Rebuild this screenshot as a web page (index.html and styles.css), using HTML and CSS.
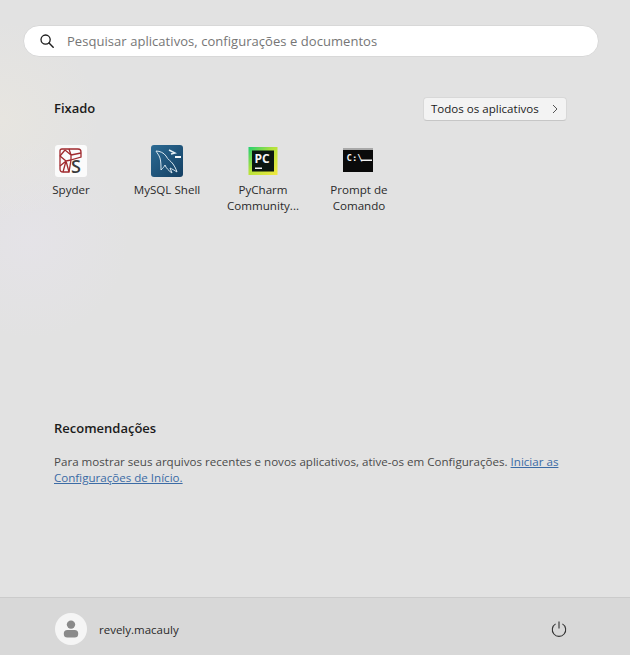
FILE: index.html
```html
<!DOCTYPE html>
<html lang="pt-BR">
<head>
<meta charset="utf-8">
<title>Iniciar</title>
<link rel="stylesheet" href="styles.css">
</head>
<body>
<main class="menu">
  <div class="content">
    <div class="search">
      <svg class="search-icon" viewBox="0 0 14 14" width="14" height="14"><circle cx="5.6" cy="5.6" r="4.6" fill="none" stroke="#1c1c1c" stroke-width="1.3"/><path d="M9 9 L13.2 13.2" stroke="#1c1c1c" stroke-width="1.4" stroke-linecap="round"/></svg>
      <span class="search-text">Pesquisar aplicativos, configurações e documentos</span>
    </div>
    <section class="pinned">
      <div class="section-head">
        <h2 class="section-title head-title">Fixado</h2>
        <div class="all-apps"><span>Todos os aplicativos</span>
          <svg class="chevron" viewBox="0 0 8 10" width="8" height="10"><path d="M2 1 L6 5 L2 9" fill="none" stroke="#555" stroke-width="1"/></svg>
        </div>
      </div>
      <div class="apps">
        <div class="app">
          <svg class="app-icon" viewBox="0 0 32 32" width="32" height="32">
            <rect width="32" height="32" rx="3" fill="#fbfbfb"/>
            <g fill="none" stroke="#a02a2e" stroke-width="1.3">
              <path d="M5 6 Q5 4 7 4 H23 Q26 4 26 7 V12 L16 15 L14 27 H8 Q5 27 5 24 Z"/>
              <path d="M5 11 L10 5 M5 11 L11 16 L16 15 M11 16 L8 27 M11 16 L5 21 M10 5 L16 10 L16 15 M16 10 L26 8 M14 4 L16 10 M11 16 L14 27"/>
            </g>
            <text x="16" y="27.5" class="spyder-s">S</text>
          </svg>
          <span class="app-label">Spyder</span>
        </div>
        <div class="app">
          <svg class="app-icon" viewBox="0 0 32 32" width="32" height="32">
            <defs><linearGradient id="my" x1="0" y1="0" x2="1" y2="1"><stop offset="0" stop-color="#2c6b94"/><stop offset="1" stop-color="#143f62"/></linearGradient></defs>
            <rect width="32" height="32" rx="3" fill="url(#my)"/>
            <path d="M5 6 C9 6 13 8 15 11 C17 15 20 16 22 19 C24 22 25 24 26 27 C23 25 21 24 19 23 L21 28 C18 26 15 23 14 20 C13 22 12 23 10 25 C10 21 10 17 9 13 C8 10 6 8 5 6 Z" fill="none" stroke="#d9e7ef" stroke-width="1"/>
            <path d="M18 5 L24 8 L20 9" fill="none" stroke="#e6f0f5" stroke-width="1.4"/>
            <rect x="24" y="11" width="6" height="2" fill="#f4f8fa"/>
          </svg>
          <span class="app-label">MySQL Shell</span>
        </div>
        <div class="app">
          <svg class="app-icon" viewBox="0 0 32 32" width="32" height="32">
            <defs><linearGradient id="pc" x1="0" y1="0" x2="1" y2="1"><stop offset="0" stop-color="#22cf72"/><stop offset=".45" stop-color="#b5e23b"/><stop offset="1" stop-color="#f2e83f"/></linearGradient></defs>
            <rect x="1.5" y="2" width="29" height="28" fill="url(#pc)"/>
            <rect x="5" y="5.5" width="22" height="21" fill="#0b1710"/>
            <text x="7.5" y="17.5" class="pc-text">PC</text>
            <rect x="8" y="22.5" width="7" height="1.5" fill="#f3f3f3"/>
          </svg>
          <span class="app-label">PyCharm Community...</span>
        </div>
        <div class="app">
          <svg class="app-icon" viewBox="0 0 32 32" width="32" height="32">
            <rect x="0" y="3" width="30" height="24" fill="#0a0a0a"/>
            <rect x="0" y="3" width="30" height="2" fill="#a8a8a8"/>
            <text x="3.5" y="15.5" class="cmd-text">C:\</text>
            <rect x="18" y="14.5" width="11" height="1.5" fill="#f2f2f2"/>
          </svg>
          <span class="app-label">Prompt de Comando</span>
        </div>
      </div>
    </section>
    <section class="recs">
      <h2 class="section-title">Recomendações</h2>
      <p class="recs-text">Para mostrar seus arquivos recentes e novos aplicativos, ative-os em Configurações. <a href="#" class="link">Iniciar as</a><br><a href="#" class="link">Configurações de Início.</a></p>
    </section>
  </div>
  <footer class="footer">
    <div class="user">
      <div class="avatar">
        <svg viewBox="0 0 16 18" width="16" height="18"><circle cx="8" cy="4.6" r="4.2" fill="#8a8a8a"/><rect x="0.8" y="10" width="14.4" height="7.6" rx="3.6" fill="#8a8a8a"/></svg>
      </div>
      <span class="username">revely.macauly</span>
    </div>
    <svg class="power" viewBox="0 0 16 16" width="16" height="16"><path d="M4.6 2.9 A6.7 6.7 0 1 0 11.4 2.9" fill="none" stroke="#333" stroke-width="1.1"/><path d="M8 0.5 V7.5" stroke="#333" stroke-width="1.1"/></svg>
  </footer>
</main>
</body>
</html>
```
FILE: styles.css
```css
* { box-sizing: border-box; }
html, body { margin: 0; height: 100%; }
body {
  font-family: "Open Sans", "Noto Sans", sans-serif;
  color: #1b1b1b;
  background: #e2e2e2;
}
.menu {
  width: 630px;
  height: 655px;
  display: flex;
  flex-direction: column;
  overflow: hidden;
  background:
    radial-gradient(circle at 0 120px, rgba(236,232,222,.5), rgba(236,232,222,0) 100px),
    radial-gradient(circle at 30px 240px, rgba(232,228,238,.45), rgba(232,228,238,0) 100px),
    #e2e2e2;
}
.content { flex: 1; padding: 25px 32px 0 23px; }
.search {
  width: 576px;
  height: 32px;
  background: #fff;
  border: 1px solid #d8d8d8;
  border-radius: 16px;
  display: flex;
  align-items: center;
  padding-left: 16px;
  gap: 13px;
}
.search-icon { flex: none; }
.search-text { font-size: 13px; color: #767676; letter-spacing: .05px; }
.pinned { margin: 40px 31px 0 31px; height: 321px; }
.section-head { display: flex; justify-content: space-between; align-items: center; height: 24px; }
.section-title { margin: 0; font-size: 13px; font-weight: 600; color: #1b1b1b; line-height: 20px; }
.head-title { padding-bottom: 2px; }
.all-apps {
  width: 144px;
  height: 24px;
  display: flex;
  align-items: center;
  justify-content: space-between;
  padding: 0 7px 2px 7px;
  font-size: 11.55px;
  background: #f3f3f3;
  border: 1px solid #d8d8d8;
  border-bottom-color: #c6c6c6;
  border-radius: 4px;
}
.chevron { flex: none; margin-top: 2px; }
.apps { display: flex; margin-top: 24px; margin-left: -31px; }
.app {
  width: 96px;
  display: flex;
  flex-direction: column;
  align-items: center;
  text-align: center;
}
.app-icon { display: block; flex: none; }
.app-label { margin-top: 5px; font-size: 11.6px; line-height: 16px; color: #2a2a2a; width: 84px; }
.spyder-s { font-family: "Open Sans", sans-serif; font-size: 18px; font-weight: 600; fill: #3a3a3a; }
.pc-text { font-family: "Open Sans", sans-serif; font-size: 12px; font-weight: 700; fill: #f5f5f5; }
.cmd-text { font-family: "DejaVu Sans Mono", monospace; font-size: 9px; font-weight: 700; fill: #f2f2f2; }
.recs { margin: 0 0 0 31px; }
.recs-text { margin: 16px 0 0; font-size: 11.58px; line-height: 16px; color: #4a4a4a; width: 512px; }
.link { color: #3b6ba5; text-decoration: underline; }
.footer {
  height: 58px;
  flex: none;
  background: #d8d8d8;
  border-top: 1px solid #cbcbcb;
  display: flex;
  align-items: center;
  justify-content: space-between;
  padding: 5px 63px 0 55px;
}
.user { display: flex; align-items: center; gap: 12px; }
.avatar {
  width: 32px;
  height: 32px;
  border-radius: 50%;
  background: #f5f5f5;
  display: flex;
  align-items: center;
  justify-content: center;
}
.username { font-size: 11.5px; color: #2a2a2a; margin-top: 1px; }
.power { flex: none; }
```
